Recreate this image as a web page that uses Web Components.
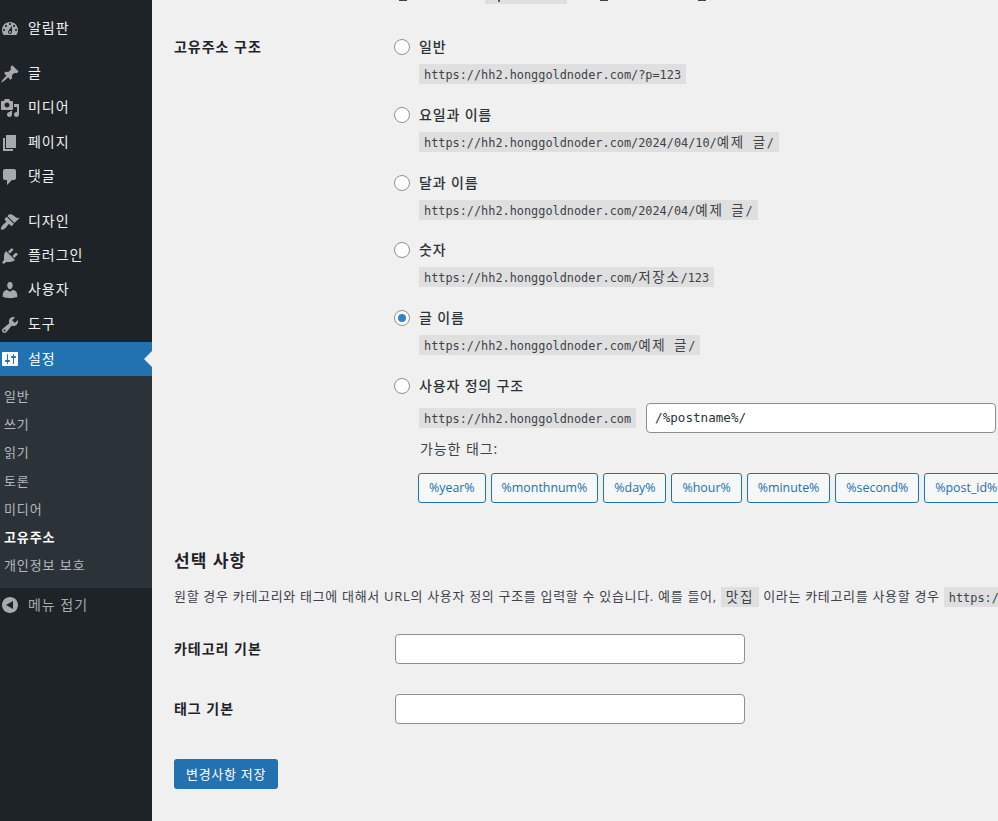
<!DOCTYPE html>
<html lang="ko">
<head>
<meta charset="utf-8">
<title>고유주소 설정</title>
<style>
html, body { margin: 0; height: 100%; overflow: hidden; background: #f0f0f1; }
body { font-family: "Open Sans", "Noto Sans CJK KR", sans-serif; font-size: 13px; color: #3c434a; }
</style>
</head>
<body>
<wp-admin>
  <admin-menu slot="menu">
    <menu-item icon="dashboard">알림판</menu-item>
    <menu-sep></menu-sep>
    <menu-item icon="post">글</menu-item>
    <menu-item icon="media">미디어</menu-item>
    <menu-item icon="page" tall="35">페이지</menu-item>
    <menu-item icon="comments">댓글</menu-item>
    <menu-sep></menu-sep>
    <menu-item icon="appearance">디자인</menu-item>
    <menu-item icon="plugins">플러그인</menu-item>
    <menu-item icon="users">사용자</menu-item>
    <menu-item icon="tools" tall="36">도구</menu-item>
    <menu-item icon="settings" current>설정</menu-item>
    <sub-menu>
      <sub-item>일반</sub-item>
      <sub-item>쓰기</sub-item>
      <sub-item>읽기</sub-item>
      <sub-item>토론</sub-item>
      <sub-item>미디어</sub-item>
      <sub-item current>고유주소</sub-item>
      <sub-item>개인정보 보호</sub-item>
    </sub-menu>
    <menu-item icon="collapse" muted>메뉴 접기</menu-item>
  </admin-menu>

  <clipped-line></clipped-line>

  <form-row label="고유주소 구조" class="structure">
    <permalink-option label="일반"><code-chip>https://hh2.honggoldnoder.com/?p=123</code-chip></permalink-option>
    <permalink-option label="요일과 이름"><code-chip>https://hh2.honggoldnoder.com/2024/04/10/<kr-text>예제 글</kr-text>/</code-chip></permalink-option>
    <permalink-option label="달과 이름"><code-chip>https://hh2.honggoldnoder.com/2024/04/<kr-text>예제 글</kr-text>/</code-chip></permalink-option>
    <permalink-option label="숫자"><code-chip>https://hh2.honggoldnoder.com/<kr-text>저장소</kr-text>/123</code-chip></permalink-option>
    <permalink-option label="글 이름" checked><code-chip>https://hh2.honggoldnoder.com/<kr-text>예제 글</kr-text>/</code-chip></permalink-option>
    <permalink-option label="사용자 정의 구조" custom>
      <code-chip>https://hh2.honggoldnoder.com</code-chip>
      <text-field slot="field" mono value="/%postname%/" width="350"></text-field>
      <tag-list slot="extra">
        <tag-button>%year%</tag-button>
        <tag-button>%monthnum%</tag-button>
        <tag-button>%day%</tag-button>
        <tag-button>%hour%</tag-button>
        <tag-button>%minute%</tag-button>
        <tag-button>%second%</tag-button>
        <tag-button>%post_id%</tag-button>
      </tag-list>
    </permalink-option>
  </form-row>

  <section-head>선택 사항</section-head>
  <help-line>원할 경우 카테고리와 태그에 대해서 URL의 사용자 정의 구조를 입력할 수 있습니다. 예를 들어, <code-chip><kr-text>맛집</kr-text></code-chip> 이라는 카테고리를 사용할 경우 <code-chip tail>https:/</code-chip></help-line>

  <form-row label="카테고리 기본" class="base"><text-field width="350"></text-field></form-row>
  <form-row label="태그 기본" class="base"><text-field width="350"></text-field></form-row>

  <primary-button>변경사항 저장</primary-button>
</wp-admin>

<script>
const KR = '"Open Sans", "Noto Sans CJK KR", sans-serif';

const ICONS = {
  dashboard: 'M3.76 16h12.48c1.1-1.37 1.76-3.11 1.76-5 0-4.42-3.58-8-8-8s-8 3.58-8 8c0 1.89.66 3.63 1.76 5zM10 4c.55 0 1 .45 1 1s-.45 1-1 1-1-.45-1-1 .45-1 1-1zM6 6c.55 0 1 .45 1 1s-.45 1-1 1-1-.45-1-1 .45-1 1-1zm8 0c.55 0 1 .45 1 1s-.45 1-1 1-1-.45-1-1 .45-1 1-1zm-5.37 5.55L12 7v6c0 1.1-.9 2-2 2s-2-.9-2-2c0-.57.24-1.08.63-1.45zM4 10c.55 0 1 .45 1 1s-.45 1-1 1-1-.45-1-1 .45-1 1-1zm12 0c.55 0 1 .45 1 1s-.45 1-1 1-1-.45-1-1 .45-1 1-1zm-5 3c0-.55-.45-1-1-1s-1 .45-1 1 .45 1 1 1 1-.45 1-1z',
  post: 'M10.44 3.02l1.82-1.82 6.36 6.35-1.83 1.82c-1.05-.68-2.48-.57-3.41.36l-.75.75c-.92.93-1.04 2.35-.35 3.41l-1.83 1.82-2.41-2.41-2.8 2.79c-.42.42-3.38 2.71-3.8 2.29s1.86-3.39 2.28-3.81l2.79-2.79L4.1 9.36l1.83-1.82c1.05.69 2.48.57 3.4-.36l.75-.75c.93-.92 1.05-2.35.36-3.41z',
  media: 'M13 11V4c0-.55-.45-1-1-1h-1.67L9 1H5L3.67 3H2c-.55 0-1 .45-1 1v7c0 .55.45 1 1 1h10c.55 0 1-.45 1-1zM7 4.5c1.38 0 2.5 1.12 2.5 2.5S8.38 9.5 7 9.5 4.5 8.38 4.5 7 5.62 4.5 7 4.5zM14 6h5v10.5c0 1.38-1.12 2.5-2.5 2.5S14 17.88 14 16.5s1.12-2.5 2.5-2.5c.17 0 .34.02.5.05V9h-3V6zm-4 8.05V13h2v3.5c0 1.38-1.12 2.5-2.5 2.5S7 17.88 7 16.5 8.12 14 9.5 14c.17 0 .34.02.5.05z',
  page: 'M6 15V2h10v13H6zm-1 1h8v2H3V5h2v11z',
  comments: 'M5 2h9c1.1 0 2 .9 2 2v7c0 1.1-.9 2-2 2h-2l-5 5v-5H5c-1.1 0-2-.9-2-2V4c0-1.1.9-2 2-2z',
  appearance: 'M14.48 11.06L7.41 3.99l1.5-1.5c.5-.56 2.3-.47 3.51.32 1.21.8 1.43 1.28 2.91 2.1 1.18.64 2.45 1.26 4.45.85zM13.77 11.77L6.7 4.7 4.93 6.47C4.54 6.86 4.54 7.49 4.93 7.88L5.99 8.94C6.38 9.33 6.38 9.97 5.99 10.36 5.39 10.96 4.56 11.47 3.78 12.05 3.43 12.31 3.08 12.58 2.77 12.89 1.43 14.23.4 16.85 1.1 17.6 1.86 18.34 4.47 17.2 5.82 15.83 6.14 15.51 6.4 15.16 6.67 14.81 7.24 14.03 7.75 13.21 8.36 12.6 8.75 12.21 9.38 12.21 9.77 12.6L10.83 13.66C11.22 14.05 11.85 14.05 12.24 13.66z',
  plugins: 'M13.11 4.36L9.87 7.6 8 5.73l3.24-3.24c.35-.34 1.05-.2 1.56.32.52.51.66 1.21.31 1.55zm-8 1.77l.91-1.12 9.01 9.01-1.19.84c-.71.71-2.63 1.16-3.82 1.16H6.14L4.9 17.26c-.59.59-1.54.59-2.12 0-.59-.58-.59-1.53 0-2.12l1.24-1.24v-3.88c0-1.13.4-3.19 1.09-3.89zm7.26 3.97l3.24-3.24c.34-.35 1.04-.21 1.55.31.52.51.66 1.21.31 1.55l-3.24 3.25z',
  users: 'M10 9.25c-2.27 0-2.73-3.44-2.73-3.44C7 4.02 7.82 2 9.97 2c2.16 0 2.98 2.02 2.71 3.81 0 0-.41 3.44-2.68 3.44zm0 2.57L12.72 10c2.39 0 4.52 2.33 4.52 4.53v2.49s-3.65 1.13-7.24 1.13c-3.65 0-7.24-1.13-7.24-1.13v-2.49c0-2.25 1.94-4.48 4.47-4.48z',
  tools: 'M16.68 9.77c-1.34 1.34-3.3 1.67-4.95.99l-5.41 6.52c-.99.99-2.59.99-3.58 0s-.99-2.59 0-3.57l6.52-5.42c-.68-1.65-.35-3.61.99-4.95 1.28-1.28 3.12-1.62 4.72-1.06l-2.89 2.89 2.82 2.82 2.86-2.87c.53 1.58.18 3.39-1.08 4.65zM3.81 16.21c.4.39 1.04.39 1.43 0 .4-.4.4-1.04 0-1.43-.39-.4-1.03-.4-1.43 0-.39.39-.39 1.03 0 1.43z',
  settings: 'M18 16V4c0-.55-.45-1-1-1H3c-.55 0-1 .45-1 1v12c0 .55.45 1 1 1h14c.55 0 1-.45 1-1zM8 11h1c.55 0 1 .45 1 1s-.45 1-1 1H8v1.5c0 .28-.22.5-.5.5s-.5-.22-.5-.5V13H6c-.55 0-1-.45-1-1s.45-1 1-1h1V5.5c0-.28.22-.5.5-.5s.5.22.5.5V11zm5-2h-1c-.55 0-1-.45-1-1s.45-1 1-1h1V5.5c0-.28.22-.5.5-.5s.5.22.5.5V7h1c.55 0 1 .45 1 1s-.45 1-1 1h-1v5.5c0 .28-.22.5-.5.5s-.5-.22-.5-.5V9z',
  collapse: 'M18 10c0-4.42-3.58-8-8-8s-8 3.58-8 8 3.58 8 8 8 8-3.58 8-8zm-5 4l-7-4 7-4v8z'
};

// small helper, every element gets an open shadow root from a string
function el(name, html, extra) {
  const t = document.createElement('template');
  t.innerHTML = html;
  customElements.define(name, class extends HTMLElement {
    constructor() {
      super();
      this.attachShadow({mode: 'open'});
      this.shadowRoot.appendChild(t.content.cloneNode(true));
    }
    connectedCallback() {
      if (extra) extra.call(this, this.shadowRoot);
    }
  });
}

el('wp-admin', `<style>
:host { display: flex; width: 998px; height: 821px; overflow: hidden; background: #f0f0f1; }
.menu { flex: 0 0 152px; background: #1d2327; }
.main { flex: 1; min-width: 0; padding-left: 22px; overflow: hidden; display: flex; flex-direction: column; align-items: flex-start; }
</style>
<div class="menu"><slot name="menu"></slot></div>
<div class="main"><slot></slot></div>`);

el('admin-menu', `<style>
:host { display: block; padding-top: 11px; }
</style><slot></slot>`);

el('menu-sep', `<style>:host { display: block; height: 11px; }</style>`);

el('menu-item', `<style>
:host { display: flex; align-items: center; height: 34px; position: relative; color: #f0f0f1; font: 14px/18px ${KR}; letter-spacing: .07em; }
:host([tall="35"]) { height: 35px; }
:host([tall="36"]) { height: 36px; }
:host([current]) { background: #2271b1; color: #fff; }
:host([muted]) { color: #a7aaad; }
svg { width: 20px; height: 20px; flex: none; margin: 2px 8px 0 0; fill: #a7aaad; }
:host([tall="35"]) svg { margin-top: 3px; }
:host([current]) svg, :host([muted]) svg { margin-top: 0; }
:host([current]) svg { fill: #fff; }
:host([current])::after { content: ""; position: absolute; right: 0; top: 50%; margin-top: -8px; border: 8px solid transparent; border-right-color: #f0f0f1; border-left: 0; }
</style>
<svg viewBox="0 0 20 20"><path></path></svg><slot></slot>`, function (root) {
  root.querySelector('path').setAttribute('d', ICONS[this.getAttribute('icon')]);
});

el('sub-menu', `<style>
:host { display: block; background: #2c3338; padding: 6px 0 8.6px; }
</style><slot></slot>`);

el('sub-item', `<style>
:host { display: block; height: 28.2px; line-height: 28px; padding-left: 4px; color: rgba(240,246,252,.7); font-family: ${KR}; font-size: 13px; letter-spacing: .07em; }
:host([current]) { color: #fff; font-weight: 600; }
</style><slot></slot>`);

// the line above the fold: only the bottom pixels of it are still on screen
el('clipped-line', `<style>
:host { display: flex; height: 4px; overflow: hidden; align-items: flex-start; width: 100%; }
.bit { flex: none; width: 8px; height: 1px; background: #3c434a; }
.bar { flex: none; width: 82px; height: 4px; background: #dfdfe0; }
.bar i { display: block; width: 2px; height: 2px; margin-left: 13px; background: #5a5f66; }
</style><div class="bit" style="margin-left:225px"></div><div class="bar" style="margin-left:78px"><i></i></div><div class="bit" style="margin-left:33px"></div><div class="bit" style="margin-left:90px"></div>`);

el('form-row', `<style>
:host { display: flex; align-items: flex-start; width: 100%; color: #1d2327; }
.th { flex: 0 0 221px; font: 700 14px/20px ${KR}; letter-spacing: .07em; }
:host(.structure) { padding-top: 33px; }
:host(.base) { height: 60px; align-items: center; }
.td { flex: 1; min-width: 0; }
</style><div class="th"></div><div class="td"><slot></slot></div>`, function (root) {
  root.querySelector('.th').textContent = this.getAttribute('label');
});

el('permalink-option', `<style>
:host { display: block; height: 67.8px; }
:host([custom]) { height: auto; }
label { display: flex; align-items: center; height: 20px; color: #2c3338; font: 500 14px/20px ${KR}; letter-spacing: .06em; }
input { appearance: none; -webkit-appearance: none; box-sizing: border-box; width: 16px; height: 16px; margin: 0 9px 0 -1px; border: 1px solid #8c8f94; border-radius: 50%; background: #fff; display: grid; place-items: center; }
input:checked::before { content: ""; width: 8px; height: 8px; border-radius: 50%; background: #3582c4; }
.chip { display: flex; align-items: center; gap: 10px; margin: 7px 0 0 24px; }
.extra { display: none; margin-left: 24px; }
:host([custom]) .extra { display: block; }
</style>
<label><input type="radio" name="selection" tabindex="-1"><span></span></label>
<div class="chip"><slot></slot><slot name="field"></slot></div>
<div class="extra"><slot name="extra"></slot></div>`, function (root) {
  root.querySelector('span').textContent = this.getAttribute('label');
  root.querySelector('input').checked = this.hasAttribute('checked');
});

el('code-chip', `<style>
:host { display: inline-block; padding: 0 5px; height: 20px; line-height: 23px; background: rgba(0,0,0,.07); color: #3c434a; font-family: "DejaVu Sans Mono", "Noto Sans CJK KR", monospace; font-size: 11.87px; white-space: pre; letter-spacing: 0; vertical-align: -1px; }
:host([tail]) { padding-right: 30px; }
</style><slot></slot>`);

// hangul inside code falls back to a double width cell in the original
el('kr-text', `<style>
:host { font-family: "Noto Sans CJK KR", sans-serif; font-size: 13.5px; line-height: 0; letter-spacing: 1.7px; word-spacing: 2.2px; }
</style><slot></slot>`);

el('text-field', `<style>
:host { display: block; }
input { display: block; box-sizing: border-box; height: 30px; padding: 0 8px; border: 1px solid #8c8f94; border-radius: 4px; background: #fff; color: #2c3338; font: 14px "Open Sans", sans-serif; outline: 0; }
input.mono { font: 12.6px "DejaVu Sans Mono", monospace; }
</style><input type="text" tabindex="-1">`, function (root) {
  const i = root.querySelector('input');
  i.style.width = this.getAttribute('width') + 'px';
  if (this.hasAttribute('mono')) i.className = 'mono';
  i.value = this.getAttribute('value') || '';
});

el('tag-list', `<style>
:host { display: block; width: 620px; }
p { margin: 6px 0 0 1px; font: 14px/20px ${KR}; color: #3c434a; letter-spacing: .065em; }
.tags { display: flex; gap: 5px; margin: 14px 0 0 -1px; }
</style><p>가능한 태그:</p><div class="tags"><slot></slot></div>`);

el('tag-button', `<style>
:host { display: block; box-sizing: border-box; height: 30px; padding: 0 10px; border: 1px solid #2271b1; border-radius: 3px; background: #f6f7f7; color: #2271b1; font: 12.4px/28px "Open Sans", sans-serif; white-space: nowrap; }
</style><slot></slot>`);

el('section-head', `<style>
:host { display: block; margin-top: 46px; color: #1d2327; font: 700 17px/24px ${KR}; letter-spacing: .06em; }
</style><slot></slot>`);

el('help-line', `<style>
:host { display: block; margin: 13px 0 13px; height: 20px; line-height: 20px; white-space: nowrap; color: #3c434a; font-family: ${KR}; font-size: 13px; letter-spacing: .053em; }
</style><slot></slot>`);

el('primary-button', `<style>
:host { display: block; box-sizing: border-box; margin-top: 20px; height: 30px; line-height: 30px; padding: 0 12px; border-radius: 3px; background: #2271b1; color: #fff; font-family: ${KR}; font-size: 13px; letter-spacing: .055em; }
</style><slot></slot>`);
</script>
</body>
</html>
